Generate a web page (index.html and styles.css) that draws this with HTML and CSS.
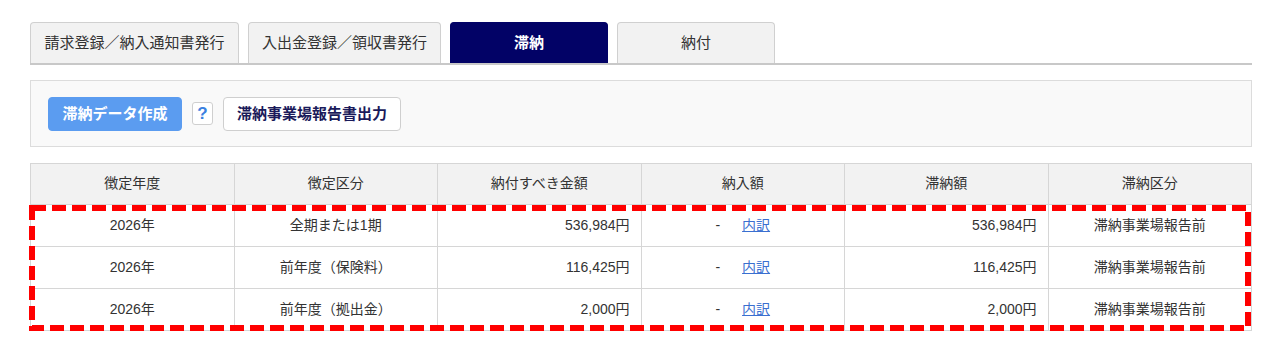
FILE: index.html
```html
<!DOCTYPE html>
<html>
<head>
<title>滞納</title>
<link rel="stylesheet" href="styles.css">
</head>
<body>
<div class="page">
  <div class="tabs">
    <div class="tab t1">請求登録／納入通知書発行</div>
    <div class="tab t2">入出金登録／領収書発行</div>
    <div class="tab t3 active">滞納</div>
    <div class="tab t4">納付</div>
  </div>

  <div class="toolbar">
    <button class="btn primary">滞納データ作成</button>
    <button class="help">?</button>
    <button class="btn plain">滞納事業場報告書出力</button>
  </div>

  <div class="tablewrap">
    <table class="list">
      <tr>
        <th>徴定年度</th>
        <th>徴定区分</th>
        <th>納付すべき金額</th>
        <th>納入額</th>
        <th>滞納額</th>
        <th>滞納区分</th>
      </tr>
      <tr>
        <td>2026年</td>
        <td>全期または1期</td>
        <td class="num">536,984円</td>
        <td><span class="dash">-</span><a href="#">内訳</a></td>
        <td class="num">536,984円</td>
        <td>滞納事業場報告前</td>
      </tr>
      <tr>
        <td>2026年</td>
        <td>前年度（保険料）</td>
        <td class="num">116,425円</td>
        <td><span class="dash">-</span><a href="#">内訳</a></td>
        <td class="num">116,425円</td>
        <td>滞納事業場報告前</td>
      </tr>
      <tr>
        <td>2026年</td>
        <td>前年度（拠出金）</td>
        <td class="num">2,000円</td>
        <td><span class="dash">-</span><a href="#">内訳</a></td>
        <td class="num">2,000円</td>
        <td>滞納事業場報告前</td>
      </tr>
    </table>
    <svg class="mark" width="1222" height="126">
      <rect x="3" y="3" width="1216" height="120" fill="none" stroke="#ff0000" stroke-width="6" stroke-dasharray="14 6"/>
    </svg>
  </div>
</div>
</body>
</html>
```

FILE: styles.css
```css
body {
	margin: 0;
	font-family: "Liberation Sans", "Noto Sans CJK JP", sans-serif;
	font-size: 14px;
	color: #333;
	background: white;
}
.page {
	width: 1222px;
	padding: 21px 0 0 30px;
}
.tabs {
	display: flex;
	gap: 9px;
	border-bottom: 2px solid #c8c8c8;
}
.tab {
	height: 41px;
	box-sizing: border-box;
	border: 1px solid #d0d0d0;
	border-bottom: none;
	border-radius: 4px 4px 0 0;
	background: #f2f2f2;
	display: flex;
	align-items: center;
	justify-content: center;
	color: #333;
	font-size: 15px;
	padding-bottom: 3px;
	margin-top: 1px;
}
.t1 { width: 209px; }
.t2 { width: 193px; }
.t3 { width: 158px; }
.t4 { width: 158px; }
.tab.active {
	background: #020266;
	border-color: #020266;
	color: white;
	font-weight: bold;
}
.toolbar {
	margin-top: 15px;
	height: 65px;
	border: 1px solid #dcdcdc;
	background: #f9f9f9;
	display: flex;
	align-items: center;
	padding-left: 17px;
	gap: 10px;
}
button {
	font-family: "Liberation Sans", "Noto Sans CJK JP", sans-serif;
	font-size: 15px;
	cursor: pointer;
}
.btn {
	height: 34px;
	border-radius: 4px;
	font-weight: bold;
	padding: 0 0 2px 0;
}
.btn.primary {
	width: 134px;
	background: #5b9cf0;
	border: 1px solid #5b9cf0;
	color: white;
}
.btn.plain {
	width: 178px;
	background: white;
	border: 1px solid #cfcfcf;
	color: #1a1a5a;
}
.help {
	width: 21px;
	height: 23px;
	padding: 0;
	background: white;
	border: 1px solid #cfcfcf;
	border-radius: 3px;
	color: #3a80e0;
	font-weight: bold;
	font-size: 17px;
	line-height: 20px;
}
.tablewrap {
	position: relative;
	margin-top: 16px;
}
table.list {
	width: 1222px;
	border-collapse: collapse;
	table-layout: fixed;
	font-size: 14px;
}
table.list th {
	height: 36px;
	padding: 0 0 4px 0;
	background: #f2f2f2;
	border: 1px solid #d6d6d6;
	font-weight: normal;
	color: #333;
}
table.list td {
	height: 37px;
	border: 1px solid #d6d6d6;
	text-align: center;
	padding: 0 11px 4px 11px;
}
table.list td.num {
	text-align: right;
}
.dash {
	margin-right: 22px;
}
a {
	color: #3a6fd0;
}
.mark {
	position: absolute;
	left: -1px;
	top: 42px;
}
```
